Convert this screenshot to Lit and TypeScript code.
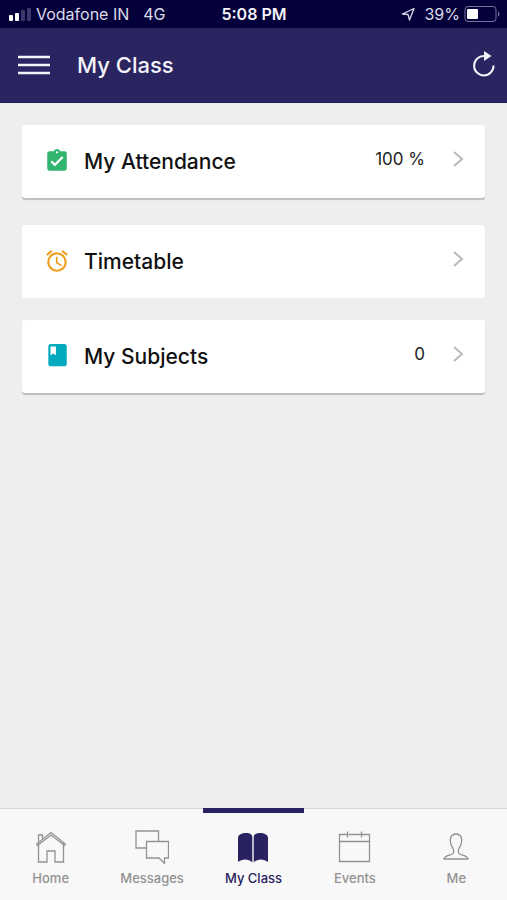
import { LitElement, html, css, svg, nothing } from "lit";
import { customElement, property } from "lit/decorators.js";
import { classMap } from "lit/directives/class-map.js";

const attendanceIcon = svg`<path fill="#32b471" fill-rule="evenodd" d="M19 3h-4.180C14.400 1.840 13.300 1 12 1s-2.400.84-2.820 2H5c-1.100 0-2 .9-2 2v14c0 1.100.9 2 2 2h14c1.100 0 2-.9 2-2V5c0-1.100-.9-2-2-2zm-7 0c.55 0 1 .45 1 1s-.45 1-1 1-1-.45-1-1 .45-1 1-1zm-2 14l-4-4 1.410-1.410L10 14.170l6.590-6.590L18 9l-8 8z"/>`;
const clockIcon = svg`<path fill="#f09d1c" d="M22 5.720l-4.600-3.860-1.290 1.530 4.600 3.860L22 5.720zM7.880 3.390L6.600 1.860 2 5.710l1.290 1.530 4.590-3.850zM12.500 8H11v6l4.750 2.850.75-1.230-4-2.370V8zM12 4c-4.970 0-9 4.030-9 9s4.020 9 9 9a9 9 0 0 0 0-18zm0 16c-3.870 0-7-3.130-7-7s3.130-7 7-7 7 3.130 7 7-3.130 7-7 7z"/>`;
const subjectIcon = svg`<path fill="#03aabd" fill-rule="evenodd" d="M19 1H6c-1.100 0-2 .9-2 2v16.500c0 1.100.9 2 2 2h13c1.100 0 2-.9 2-2V3c0-1.100-.9-2-2-2zM6 3.200h5v8l-2.500-1.500L6 11.200V3.200z"/>`;

const homeIcon = svg`<path d="M2 14.500 17 2.500l15 12M4.500 12.800V32h8.500V21h8v11h8.500V12.800M2.800 16 17 5l14.200 11M4.500 11.500V5h4v3.500"/>`;
const messagesIcon = svg`<path d="M23.500 11V1H1v17h10M11.500 11.500H33.500V28h-4v5.500L24 28H11.500z"/>`;
const bookIcon = svg`<path fill="currentColor" stroke="none" d="M16.300 32.500V7c0-2.500-2.500-4-6-4C5.800 3 2 4.500 2 8v24c4-3.500 11-3.500 14.300.5zM17.700 32.500V7c0-2.500 2.500-4 6-4C28.200 3 32 4.500 32 8v24c-4-3.500-11-3.500-14.300.5z"/>`;
const calendarIcon = svg`<path d="M9.500 4.500h-8v27h30v-27h-5M10.500 4.500h12M1.500 11.500h30M9.500 1.500v6M23.500 1.500v6M22 4.500h5"/>`;
const personIcon = svg`<path d="M17 4c-4 0-6 3-5.700 7 .2 3.500 1.200 5.500 2.700 7.500 1 1.500 1 4.500-.5 5.500-3 1.500-8 1.500-8.500 5h24c-.5-3.500-5.500-3.500-8.500-5-1.500-1-1.500-4-.5-5.500 1.500-2 2.500-4 2.700-7.500C23 7 21 4 17 4z"/>`;

@customElement("status-bar")
export class StatusBar extends LitElement {
  static styles = css`
    :host {
      display: grid;
      grid-template-columns: 1fr auto 1fr;
      align-items: center;
      height: 28px;
      padding: 0 7px 0 8px;
      background: #03003a;
      color: #dcdbe8;
      font-size: 16px;
      line-height: 20px;
      white-space: nowrap;
    }
    .left, .right { display: flex; align-items: center; }
    .signal { margin-right: 5px; }
    .network { margin-left: 14px; }
    .time { font-weight: 600; color: #f3f3f8; }
    .right { justify-content: flex-end; }
    .arrow { margin-right: 9px; }
    .battery { margin-left: 4px; }
  `;
  render() {
    return html`
      <div class="left">
        <svg class="signal" width="23" height="13" aria-hidden="true">
          <g fill="#fff"><rect x="1" y="7" width="4" height="6" rx="1"/><rect x="7" y="5" width="4" height="8" rx="1"/></g>
          <g fill="#3b386a"><rect x="13" y="2" width="4" height="11" rx="1"/><rect x="19" y="0" width="4" height="13" rx="1"/></g>
        </svg>
        <span>Vodafone IN</span><span class="network">4G</span>
      </div>
      <span class="time">5:08 PM</span>
      <div class="right">
        <svg class="arrow" width="14" height="14" fill="none" stroke="#dcdbe8" stroke-width="1.300" stroke-linejoin="round" aria-hidden="true"><path d="M13 1.500 1.500 7l5.500.5L8.500 13z"/></svg>
        <span>39%</span>
        <svg class="battery" width="36" height="16" aria-hidden="true">
          <rect x="1" y=".5" width="31" height="15" rx="3" fill="none" stroke="#77759b"/>
          <rect x="3" y="3" width="11" height="10" rx="1" fill="#fff"/>
          <path d="M34 5.500c2 1 2 4 0 5z" fill="#77759b"/>
        </svg>
      </div>`;
  }
}

@customElement("class-card")
export class ClassCard extends LitElement {
  @property() label = "";
  @property() value = "";
  @property({ attribute: false }) icon: unknown = nothing;
  @property({ type: Boolean }) raised = false;

  static styles = css`
    :host { display: block; }
    .card {
      display: flex;
      align-items: center;
      box-sizing: border-box;
      width: 100%;
      min-height: 73px;
      padding: 0 21px 0 22px;
      border: 0;
      border-radius: 3px;
      background: #fff;
      color: #111;
      font: inherit;
      text-align: left;
    }
    .raised { box-shadow: 0 2px 1px #bdbdbd; }
    .icon { flex: none; margin-right: 14px; padding-bottom: 2px; }
    .label { flex: 1; font-size: 21px; line-height: 28px; font-weight: 500; }
    .end { display: flex; align-items: center; gap: 28px; padding-bottom: 6px; }
    .value { font-size: 17px; line-height: 24px; color: #222; }
  `;
  render() {
    return html`<button class=${classMap({ card: true, raised: this.raised })}>
      <svg class="icon" width="26" height="26" viewBox="0 0 24 24" aria-hidden="true">${this.icon}</svg>
      <span class="label">${this.label}</span>
      <span class="end">
        <span class="value">${this.value}</span>
        <svg width="11" height="18" fill="none" stroke="#b9b9b9" stroke-width="2" aria-hidden="true"><path d="m1 2 8 7-8 7"/></svg>
      </span>
    </button>`;
  }
}

@customElement("tab-bar")
export class TabBar extends LitElement {
  static tabs = [
    { label: "Home", icon: homeIcon },
    { label: "Messages", icon: messagesIcon },
    { label: "My Class", icon: bookIcon, active: true },
    { label: "Events", icon: calendarIcon },
    { label: "Me", icon: personIcon },
  ];
  static styles = css`
    :host { display: block; background: #f8f8f8; box-shadow: inset 0 1px #d4d4d4; }
    .tabs { display: grid; grid-template-columns: repeat(5, 1fr); }
    .tab {
      display: flex;
      flex-direction: column;
      align-items: center;
      gap: 4px;
      padding: 17px 0 12px;
      border-top: 5px solid transparent;
      color: #929292;
      font-size: 13px;
      line-height: 20px;
      font-weight: 500;
      text-decoration: none;
    }
    .active { border-color: #292260; color: #292260; }
  `;
  render() {
    return html`<nav class="tabs">${TabBar.tabs.map(
      (t) => html`<a href="#" class=${classMap({ tab: true, active: !!t.active })} aria-current=${t.active ? "page" : nothing}>
        <svg width="34" height="34" fill="none" stroke="currentColor" stroke-width="1.300" aria-hidden="true">${t.icon}</svg>
        <span>${t.label}</span>
      </a>`
    )}</nav>`;
  }
}

@customElement("app-root")
export class AppRoot extends LitElement {
  static styles = css`
    :host {
      display: flex;
      flex-direction: column;
      min-height: 100vh;
      background: #eee;
      font-family: Inter, "Liberation Sans", sans-serif;
    }
    .header {
      display: flex;
      align-items: center;
      box-sizing: border-box;
      height: 75px;
      padding: 0 11px 0 18px;
      background: #2a2460;
      border-bottom: 1px solid #1f194f;
      color: #f4f3fa;
    }
    .tool { display: flex; padding: 0; border: 0; background: none; color: inherit; }
    .title { flex: 1; margin: 0 0 0 27px; font-size: 22px; line-height: 28px; font-weight: 500; }
    .content { flex: 1; display: flex; flex-direction: column; gap: 27px; padding: 22px 22px 24px 22px; }
    .group { display: flex; flex-direction: column; gap: 22px; }
  `;
  render() {
    return html`
      <status-bar></status-bar>
      <header class="header">
        <button class="tool" aria-label="Menu">
          <svg width="32" height="20" stroke="currentColor" stroke-width="2.600"><path d="M0 2h32M0 10h32M0 18h32"/></svg>
        </button>
        <h1 class="title">My Class</h1>
        <button class="tool" aria-label="Refresh">
          <svg width="24" height="28" fill="none" stroke="currentColor" stroke-width="2"><path d="M21.500 14.500A9.700 9.700 0 1 1 12 5"/><path d="M12 0v10l7.500-5z" fill="currentColor" stroke="none"/></svg>
        </button>
      </header>
      <main class="content">
        <class-card raised label="My Attendance" value="100 %" .icon=${attendanceIcon}></class-card>
        <div class="group">
          <class-card label="Timetable" .icon=${clockIcon}></class-card>
          <class-card raised label="My Subjects" value="0" .icon=${subjectIcon}></class-card>
        </div>
      </main>
      <tab-bar></tab-bar>`;
  }
}
